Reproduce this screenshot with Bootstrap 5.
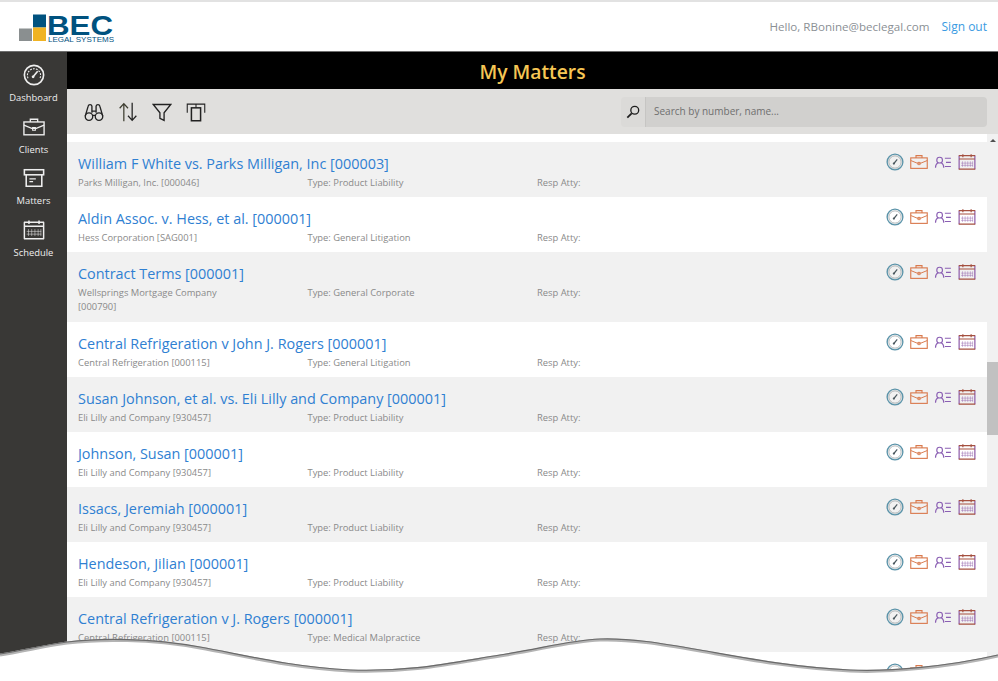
<!DOCTYPE html>
<html lang="en">
<head>
  <meta charset="UTF-8">
  <meta name="viewport" content="width=device-width, initial-scale=1.0">
  <title>My Matters</title>
  <link href="https://cdn.jsdelivr.net/npm/bootstrap@5.3.0/dist/css/bootstrap.min.css" rel="stylesheet">
  <style>
    html, body { height: 100%; overflow: hidden; }
    body { font-family: "Open Sans", "Noto Sans", sans-serif; background: #fff; position: relative; }
    .top-bar { height: 52px; border-top: 2px solid #e2e2e2; border-bottom: 1px solid #6e6e6e; padding-left: 19px; padding-right: 11px; }
    .hello { font-size: 11.6px; color: #8b9095; }
    .signout { font-size: 12px; color: #3a9be2; text-decoration: none; margin-left: 12px; }
    .shell { height: 629px; }
    .side-nav { width: 67px; background: #393836; padding-top: 12px; flex-shrink: 0; }
    .side-link { height: 51.5px; color: #eee; font-size: 9.4px; text-decoration: none; line-height: 14px; }
    .side-link svg { width: 22px; height: 22px; margin-bottom: 5px; }
    .main-col { min-width: 0; }
    .page-title { height: 37px; padding-top: 3px; background: #000; color: #f6c654; font-size: 19.3px; font-weight: 600; flex-shrink: 0; }
    .tool-row { height: 45px; background: #e0dfdd; padding-left: 17px; padding-right: 11px; flex-shrink: 0; }
    .tool-row .tool-icon { width: 20px; height: 20px; margin-right: 14px; }
    .find-box { width: 366px; height: 30px; }
    .find-box .input-group-text { width: 26px; padding: 0; justify-content: center; background: #dbdad8; border: 0; border-right: 2px solid #c6c5c3; border-radius: 4px 0 0 4px; }
    .find-box .form-control { background: #d1d0ce; border: 0; border-radius: 0 4px 4px 0; font-size: 10px; padding-left: 8px; }
    .find-box .form-control::placeholder { color: #6f6f6f; opacity: 1; }
    .scroll-area { min-height: 0; }
    .matter-list { padding-top: 8px; }
    .matter-row { height: 55px; padding: 11px 11px 0; }
    .matter-row.tall { height: 70px; }
    .matter-row:nth-child(odd) { background: #f1f1f1; }
    .matter-head { height: 22px; }
    .matter-name { font-size: 14.4px; line-height: 22px; color: #2f80d2; text-decoration: none; }
    .matter-icons svg { width: 18px; height: 18px; margin-left: 6px; }
    .tone-gauge { color: #5b93a9; }
    .tone-case { color: #d97a4e; }
    .tone-person { color: #8a5fb3; }
    .tone-cal { color: #8d5aa8; --cal-top: #a5503f; }
    .cal-top { stroke: var(--cal-top, currentColor); }
    .matter-sub { font-size: 9.4px; line-height: 14px; color: #8a8a8a; margin-top: 1px; }
    .sub-col { width: 229.5px; padding-right: 70px; flex-shrink: 0; }
    .scroll-rail { width: 11px; background: #f1f1f1; flex-shrink: 0; }
    .scroll-arrow { display: block; width: 0; margin: 5px auto 220px; border-left: 3px solid transparent; border-right: 3px solid transparent; border-bottom: 3px solid #505050; }
    .scroll-thumb { height: 73px; background: #c1c1c1; }
    .tear-edge { position: absolute; left: 0; bottom: 0; width: 998px; height: 50px; }
  </style>
</head>
<body>
  <svg width="0" height="0" class="d-block">
    <symbol id="ic-gauge" viewBox="0 0 24 24" fill="none" stroke="currentColor" stroke-width="1.800">
      <circle cx="12" cy="12" r="10.500"/>
      <circle cx="12" cy="12" r="8.200" stroke="#9aa0a3" stroke-width="1"/>
      <path d="M10.500 14l4.500-5.500" stroke="#4d5a60" stroke-width="1.600"/>
      <circle cx="10.500" cy="14" r="1.500" fill="#4d5a60" stroke="none"/>
    </symbol>
    <symbol id="ic-gauge-w" viewBox="0 0 24 24" fill="none" stroke="currentColor" stroke-width="1.800">
      <circle cx="12" cy="12" r="10.500"/>
      <path d="M5.500 15.500a7.200 7.200 0 1 1 13 0" stroke-width="1.200" stroke-dasharray="2 1.300"/>
      <path d="M11 14l5-6" stroke-width="1.800"/>
      <circle cx="11" cy="14" r="1.500" fill="currentColor" stroke="none"/>
    </symbol>
    <symbol id="ic-case" viewBox="0 0 24 24" fill="none" stroke="currentColor" stroke-width="1.500">
      <rect x="1" y="6.500" width="22" height="14"/>
      <path d="M8 6.500V3.500h8v3"/>
      <path d="M1 10l8.500 3.500h5L23 10" stroke-width="1.300"/>
      <path d="M10.500 12.500h3v3h-3z" stroke-width="1.200"/>
    </symbol>
    <symbol id="ic-person" viewBox="0 0 24 24" fill="none" stroke="currentColor" stroke-width="1.500">
      <circle cx="7.500" cy="9.500" r="3.800"/>
      <path d="M2 19.500c0-3.500 1.500-5.500 3.200-6.500M13 19.500c0-3.500-1.500-5.500-3.200-6.500"/>
      <path d="M14.500 7h8M16 12.500h6.500M14.500 18h8"/>
    </symbol>
    <symbol id="ic-box" viewBox="0 0 24 24" fill="none" stroke="currentColor" stroke-width="1.700">
      <rect x="1.500" y="3" width="21" height="5.500"/>
      <path d="M3.500 8.500V21h17V8.500"/>
      <path d="M7 13h7M7 16h4" stroke-width="1.500"/>
    </symbol>
    <symbol id="ic-cal" viewBox="0 0 24 24" fill="none" stroke="currentColor" stroke-width="1.600">
      <path d="M1.500 3.500v18M22.500 3.500v18"/>
      <path class="cal-top" d="M1 3.500h22M1 21.500h22M1.500 8h21M6.500 1.500v4M17.500 1.500v4"/>
      <path d="M6 11v7.500M9.500 11v7.500M13 11v7.500M16.500 11v7.500M19.500 11v7.500" stroke-width="1" opacity=".55"/>
      <path d="M4 13.500h16M4 16.500h16" stroke-width="1" opacity=".55"/>
    </symbol>
  </svg>

  <header class="top-bar d-flex align-items-center justify-content-between">
    <svg width="96" height="30" viewBox="0 0 96 30" class="d-block overflow-visible">
      <rect x="14" y="2.500" width="13" height="13" fill="#00527f"/>
      <rect x="14" y="15.500" width="13" height="13.500" fill="#f0b323"/>
      <rect x="0" y="16.500" width="13" height="12.500" fill="#8a8f90"/>
      <text x="28" y="22.500" font-family="Liberation Sans, sans-serif" font-weight="700" font-size="28" fill="#00527f" textLength="66" lengthAdjust="spacingAndGlyphs">BEC</text>
      <text x="29" y="29.500" font-family="Liberation Sans, sans-serif" font-size="8" fill="#00527f" textLength="66" lengthAdjust="spacingAndGlyphs">LEGAL SYSTEMS</text>
    </svg>
    <div class="d-flex align-items-center">
      <span class="hello">Hello, RBonine@beclegal.com</span>
      <a class="signout" href="#">Sign out</a>
    </div>
  </header>

  <div class="shell d-flex">
    <nav class="side-nav d-flex flex-column">
      <a class="side-link d-flex flex-column align-items-center" href="#"><svg><use href="#ic-gauge-w"/></svg>Dashboard</a>
      <a class="side-link d-flex flex-column align-items-center" href="#"><svg><use href="#ic-case"/></svg>Clients</a>
      <a class="side-link d-flex flex-column align-items-center" href="#"><svg><use href="#ic-box"/></svg>Matters</a>
      <a class="side-link d-flex flex-column align-items-center" href="#"><svg><use href="#ic-cal"/></svg>Schedule</a>
    </nav>

    <main class="main-col flex-grow-1 d-flex flex-column">
      <div class="page-title d-flex align-items-center justify-content-center">My Matters</div>
      <div class="tool-row d-flex align-items-center justify-content-between">
        <div class="d-flex align-items-center">
          <svg class="tool-icon" viewBox="0 0 24 24" fill="none" stroke="#222" stroke-width="1.600">
            <circle cx="6" cy="17.500" r="4.500"/><circle cx="18" cy="17.500" r="4.500"/>
            <path d="M1.500 17L5 5c.5-2.500 4-2.500 4.500 0V13M22.500 17L19 5c-.5-2.500-4-2.500-4.500 0V13M9.500 11h5M10 16h4"/>
          </svg>
          <svg class="tool-icon" viewBox="0 0 24 24" fill="none" stroke="#222" stroke-width="1.500">
            <path d="M7 23V2M2 7.500L7 2l5 5.500" stroke="#3d3d30"/><path d="M17 1v21M12 16.500l5 5.500 5-5.500"/>
          </svg>
          <svg class="tool-icon" viewBox="0 0 24 24" fill="none" stroke="#222" stroke-width="1.600">
            <path d="M1.500 3h21l-8 10v9l-5-2.500V13z"/>
          </svg>
          <svg class="tool-icon" viewBox="0 0 24 24" fill="none" stroke="#222" stroke-width="1.500">
            <path d="M1.500 13V2.500h21V13" stroke-width="1.300"/><rect x="6.500" y="7" width="11" height="15.500" stroke-width="1.800"/><path d="M12 2.500V7" stroke-width="1.300"/>
          </svg>
        </div>
        <div class="input-group find-box">
          <span class="input-group-text">
            <svg width="14" height="14" viewBox="0 0 16 16" fill="none" stroke="#1e1e1e" stroke-width="1.500"><circle cx="10" cy="6" r="4.500"/><path d="M6.500 9.500L1.500 14.500" stroke-width="2"/></svg>
          </span>
          <input type="text" class="form-control shadow-none" placeholder="Search by number, name...">
        </div>
      </div>

      <div class="scroll-area flex-grow-1 d-flex overflow-hidden">
        <div class="matter-list flex-grow-1" id="matterList"></div>
        <div class="scroll-rail"><span class="scroll-arrow"></span><div class="scroll-thumb"></div></div>
      </div>
    </main>
  </div>

  <svg class="tear-edge" viewBox="0 631 998 50" preserveAspectRatio="none">
    <path d="M0 654C25 650 45 645 67 642C100 638 150 638 200 647C240 654 290 667 350 670C410 672 450 663 500 655C540 649 570 640 600 639C630 638 660 643 700 650C740 657 790 667 850 670C890 672 950 666 998 655V681H0Z" fill="#fff"/>
    <path d="M0 654C25 650 45 645 67 642C100 638 150 638 200 647C240 654 290 667 350 670C410 672 450 663 500 655C540 649 570 640 600 639C630 638 660 643 700 650C740 657 790 667 850 670C890 672 950 666 998 655" fill="none" stroke="#b4b4b4" stroke-width="3" transform="translate(0 1)"/>
    <path d="M0 654C25 650 45 645 67 642C100 638 150 638 200 647C240 654 290 667 350 670C410 672 450 663 500 655C540 649 570 640 600 639C630 638 660 643 700 650C740 657 790 667 850 670C890 672 950 666 998 655" fill="none" stroke="#6a6a6a" stroke-width="1.200"/>
  </svg>

  <script>
    const matters = [
      ['William F White vs. Parks Milligan, Inc [000003]', 'Parks Milligan, Inc. [000046]', 'Product Liability'],
      ['Aldin Assoc. v. Hess, et al. [000001]', 'Hess Corporation [SAG001]', 'General Litigation'],
      ['Contract Terms [000001]', 'Wellsprings Mortgage Company [000790]', 'General Corporate', true],
      ['Central Refrigeration v John J. Rogers [000001]', 'Central Refrigeration [000115]', 'General Litigation'],
      ['Susan Johnson, et al. vs. Eli Lilly and Company [000001]', 'Eli Lilly and Company [930457]', 'Product Liability'],
      ['Johnson, Susan [000001]', 'Eli Lilly and Company [930457]', 'Product Liability'],
      ['Issacs, Jeremiah [000001]', 'Eli Lilly and Company [930457]', 'Product Liability'],
      ['Hendeson, Jilian [000001]', 'Eli Lilly and Company [930457]', 'Product Liability'],
      ['Central Refrigeration v J. Rogers [000001]', 'Central Refrigeration [000115]', 'Medical Malpractice'],
      null // next row, only its icons show above the torn edge
    ];

    const iconSet = `
      <div class="matter-icons d-flex">
        <svg class="tone-gauge"><use href="#ic-gauge"/></svg>
        <svg class="tone-case"><use href="#ic-case"/></svg>
        <svg class="tone-person"><use href="#ic-person"/></svg>
        <svg class="tone-cal"><use href="#ic-cal"/></svg>
      </div>`;

    const list = document.getElementById('matterList');
    matters.forEach(m => {
      const row = document.createElement('div');
      row.className = 'matter-row' + (m && m[3] ? ' tall' : '');
      if (!m) {
        row.innerHTML = `<div class="matter-head d-flex justify-content-end align-items-start">${iconSet}</div>`;
      } else {
        row.innerHTML = `
          <div class="matter-head d-flex justify-content-between align-items-start">
            <a class="matter-name" href="#">${m[0]}</a>
            ${iconSet}
          </div>
          <div class="matter-sub d-flex">
            <div class="sub-col">${m[1]}</div>
            <div class="sub-col">Type: ${m[2]}</div>
            <div class="sub-col">Resp Atty:</div>
          </div>`;
      }
      list.appendChild(row);
    });
  </script>
  <script src="https://cdn.jsdelivr.net/npm/bootstrap@5.3.0/dist/js/bootstrap.bundle.min.js"></script>
</body>
</html>
